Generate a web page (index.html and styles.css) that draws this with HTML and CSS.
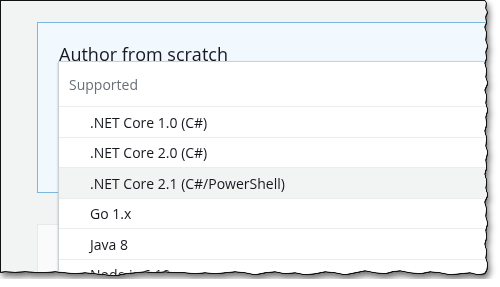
FILE: index.html
```html
<!DOCTYPE html>
<html>
  <head>
    <title>Author from scratch</title>
    <link rel="stylesheet" href="styles.css">
  </head>
  <body>
    <div class="shot">
      <div class="frame">
        <div class="page">
          <section class="card">
            <h2>Author from scratch</h2>
          </section>
          <section class="panel"></section>

          <div class="menu">
            <div class="group">Supported</div>
            <div class="item">.NET Core 1.0 (C#)</div>
            <div class="item">.NET Core 2.0 (C#)</div>
            <div class="item hover">.NET Core 2.1 (C#/PowerShell)</div>
            <div class="item">Go 1.x</div>
            <div class="item">Java 8</div>
            <div class="item">Node.js 6.10</div>
          </div>
        </div>
      </div>
    </div>
  </body>
</html>
```

FILE: styles.css
```css
* { box-sizing: border-box; }
body {
  margin: 0;
  background: #fff;
  font-family: "Open Sans", "Liberation Sans", sans-serif;
  color: #16191f;
}

/* torn-paper frame round the screenshot */
.shot {
  width: 494px;
  filter: drop-shadow(1px 0 0 #111) drop-shadow(0 1px 0 #111)
          drop-shadow(2px 4px 3px rgba(0, 0, 0, 0.55));
}
.frame {
  width: 490px;
  height: 279px;
  border-top: 1px solid #111;
  border-left: 1px solid #111;
  clip-path: polygon(0 0, 484px 0, 486px 3px, 485px 8px, 487px 12px, 485px 17px,
    486px 22px, 484px 27px, 486px 33px, 485px 40px, 487px 46px, 485px 52px,
    486px 58px, 484px 63px, 486px 70px, 485px 77px, 487px 83px, 484px 90px,
    486px 96px, 485px 103px, 487px 110px, 485px 117px, 486px 124px, 484px 131px,
    486px 138px, 485px 146px, 487px 152px, 485px 160px, 486px 167px, 484px 174px,
    486px 181px, 485px 188px, 487px 195px, 484px 202px, 486px 209px, 485px 216px,
    487px 223px, 485px 230px, 486px 237px, 484px 244px, 486px 251px, 485px 258px,
    487px 264px, 486px 270px, 484px 273px, 478px 274px, 470px 272px, 460px 273px,
    450px 274px, 440px 272px, 430px 271px, 420px 273px, 410px 272px, 400px 270px,
    392px 271px, 385px 273px, 375px 272px, 365px 270px, 355px 272px, 345px 274px,
    335px 272px, 325px 271px, 315px 273px, 305px 274px, 295px 272px, 285px 273px,
    275px 271px, 265px 272px, 255px 274px, 245px 272px, 235px 271px, 225px 272px,
    215px 273px, 205px 272px, 195px 273px, 185px 272px, 175px 272px, 165px 271px,
    155px 272px, 145px 271px, 135px 272px, 125px 273px, 115px 275px, 105px 274px,
    95px 273px, 85px 272px, 75px 273px, 65px 272px, 55px 271px, 45px 272px,
    35px 272px, 25px 271px, 15px 272px, 5px 271px, 0 272px);
}

.page {
  position: relative;
  height: 278px;
  overflow: hidden;
  background: #f2f3f3;
  padding: 21px 0 0 36px;
}

.card {
  height: 171px;
  width: 520px;
  border: 1px solid #7ab6dd;
  background: #f1f8fe;
  padding: 20px 21px 0;
}
.card h2 {
  margin: 0;
  font-size: 18px;
  font-weight: normal;
  line-height: 22px;
}

.panel {
  margin-top: 31px;
  width: 520px;
  height: 52px;
  border: 1px solid #e6e9e9;
  background: #fafafa;
}

/* open dropdown, lies over the card */
.menu {
  position: absolute;
  left: 57px;
  top: 60px;
  width: 480px;
  height: 218px;
  overflow: hidden;
  background: #fff;
  border: 1px solid #c9d1d4;
  box-shadow: 0 1px 2px rgba(0, 28, 36, 0.25);
  font-size: 14px;
}
.group {
  height: 44px;
  padding: 0 10px;
  display: flex;
  align-items: center;
  color: #687078;
}
.item {
  height: 30.5px;
  border-top: 1px solid #eaeded;
  padding: 1px 0 0 31px;
  display: flex;
  align-items: center;
}
.item.hover { background: #f2f3f3; }
```
